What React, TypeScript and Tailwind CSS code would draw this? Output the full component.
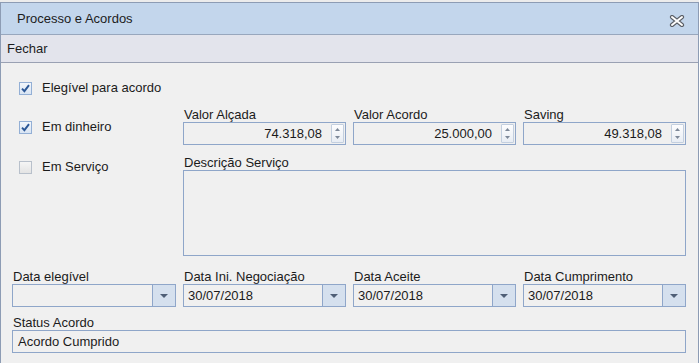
const font = "font-['Liberation_Sans',Arial,sans-serif]"

function CloseIcon() {
  return (
    <svg width="16" height="12" viewBox="0 0 16 12" className="mt-[5px]">
      <path d="M3 2 L13 10 M13 2 L3 10" stroke="#5b5f66" strokeWidth="4.2" strokeLinecap="round" />
      <path d="M3 2 L13 10 M13 2 L3 10" stroke="#ffffff" strokeWidth="2" strokeLinecap="round" />
    </svg>
  )
}

function CheckBox({ checked }: { checked: boolean }) {
  return (
    <div
      className={
        checked
          ? 'w-[13px] h-[13px] border border-[#93afd5] bg-gradient-to-b from-[#f2f6fb] to-[#d8e4f3] flex items-center justify-center'
          : 'w-[13px] h-[13px] border border-[#b8c0cb] bg-gradient-to-b from-[#f5f5f5] to-[#e4e4e4]'
      }
    >
      {checked && (
        <svg width="9" height="9" viewBox="0 0 9 9">
          <path d="M1 4.6 L3.4 7.2 L8 1.2" stroke="#2b5796" strokeWidth="1.9" fill="none" />
        </svg>
      )}
    </div>
  )
}

function Check({ label, checked }: { label: string; checked: boolean }) {
  return (
    <div className="h-[16px] flex items-center pl-[7px] gap-[10px]">
      <CheckBox checked={checked} />
      <span className="text-[13px] leading-[16px] text-[#1b1b1b]">{label}</span>
    </div>
  )
}

function Label({ children }: { children: React.ReactNode }) {
  return <div className="h-[15px] leading-[15px] text-[13px] text-[#1b1b1b] pl-[1px] whitespace-nowrap">{children}</div>
}

function Spin({ label, value }: { label: string; value: string }) {
  return (
    <div>
      <Label>{label}</Label>
      <div className="h-[23px] border border-[#8fa6c9] flex">
        <div className="flex-1 text-right text-[13px] leading-[21px] text-[#1b1b1b] pr-[9px]">{value}</div>
        <div className="w-[13px] mt-[1px] mb-[1px] mr-[1px] border border-[#c3cfdf] rounded-[1px] bg-gradient-to-b from-[#fdfdfe] to-[#e8edf4] flex flex-col items-center justify-center gap-[5px]">
          <svg width="5" height="3" viewBox="0 0 5 3"><path d="M0 3 L2.5 0 L5 3 Z" fill="#7d8899" /></svg>
          <svg width="5" height="3" viewBox="0 0 5 3"><path d="M0 0 L2.5 3 L5 0 Z" fill="#7d8899" /></svg>
        </div>
      </div>
    </div>
  )
}

function Combo({ label, value }: { label: string; value: string }) {
  return (
    <div>
      <Label>{label}</Label>
      <div className="h-[23px] border border-[#8fa6c9] flex">
        <div className="flex-1 text-[13px] leading-[21px] text-[#1b1b1b] pl-[4px]">{value}</div>
        <div className="w-[23px] border-l border-[#8fa6c9] bg-[#d5e0ee] flex items-center justify-center">
          <svg width="8" height="4" viewBox="0 0 8 4"><path d="M0 0 L8 0 L4 4 Z" fill="#4f5e76" /></svg>
        </div>
      </div>
    </div>
  )
}

export default function App() {
  return (
    <div className={`w-[699px] h-[363px] bg-[#ececec] pt-[2px] overflow-hidden ${font}`}>
      <div className="h-[400px] bg-[#f0f0f0] border-x border-t border-[#8d9cb4] flex flex-col">
        <div className="h-[32px] shrink-0 bg-[#c3d6ec] border-b border-[#98a7bd] flex items-center justify-between pl-[16px] pr-[13px]">
          <span className="text-[13px] text-[#1c1c1c]">Processo e Acordos</span>
          <CloseIcon />
        </div>
        <div className="h-[28px] shrink-0 bg-[#e3e4ec] border-b border-[#9aa1b3] flex items-center pl-[6px]">
          <span className="text-[13px] text-[#1c1c1c]">Fechar</span>
        </div>

        <div className="pl-[11px]">
          <div className="flex gap-[7px]">
            <div className="w-[164px] pt-[17px] flex flex-col">
              <Check label="Elegível para acordo" checked />
              <div className="mt-[23px]">
                <Check label="Em dinheiro" checked />
              </div>
              <div className="mt-[24px]">
                <Check label="Em Serviço" checked={false} />
              </div>
            </div>
            <div className="w-[503px] pt-[44px]">
              <div className="grid grid-cols-3 gap-[7px]">
                <Spin label="Valor Alçada" value="74.318,08" />
                <Spin label="Valor Acordo" value="25.000,00" />
                <Spin label="Saving" value="49.318,08" />
              </div>
              <div className="mt-[10px]">
                <Label>Descrição Serviço</Label>
                <div className="h-[86px] border border-[#8fa6c9]" />
              </div>
            </div>
          </div>

          <div className="mt-[13px] grid grid-cols-[164px_163px_163px_163px] gap-x-[7px]">
            <Combo label="Data elegível" value="" />
            <Combo label="Data Ini. Negociação" value="30/07/2018" />
            <Combo label="Data Aceite" value="30/07/2018" />
            <Combo label="Data Cumprimento" value="30/07/2018" />
          </div>

          <div className="mt-[8px] w-[674px]">
            <Label>Status Acordo</Label>
            <div className="h-[23px] border border-[#8fa6c9] text-[13px] leading-[21px] text-[#1b1b1b] pl-[5px]">
              Acordo Cumprido
            </div>
          </div>
        </div>
      </div>
    </div>
  )
}
